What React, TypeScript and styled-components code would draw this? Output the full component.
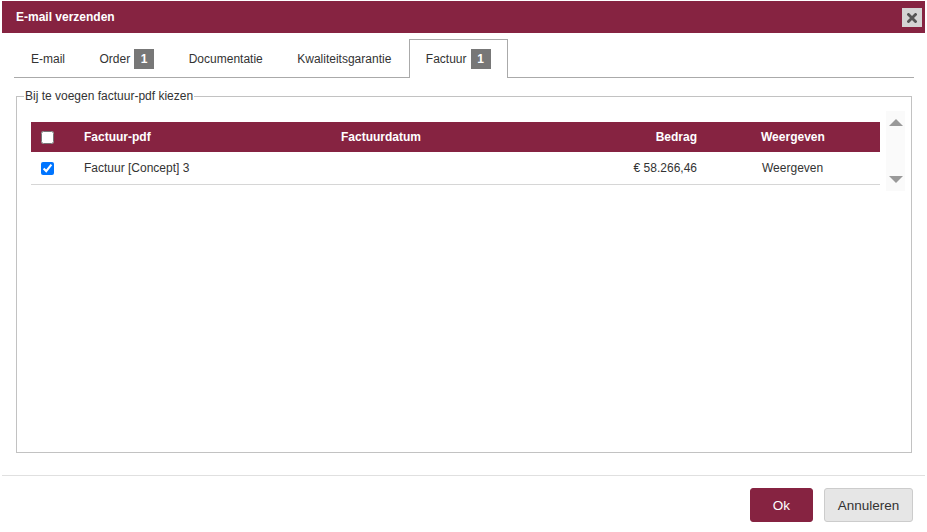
import React from 'react'
import styled, { createGlobalStyle } from 'styled-components'

const maroon = '#862341'

const GlobalStyle = createGlobalStyle`
  html, body {
    margin: 0;
    padding: 0;
    background: #fff;
  }
  body {
    font-family: "Liberation Sans", Arial, sans-serif;
    font-size: 12px;
    color: #333;
  }
`

const Dialog = styled.div`
  width: 927px;
  height: 532px;
  display: flex;
  flex-direction: column;
  box-sizing: border-box;
  padding: 1px 2px 0;
`

const TitleBar = styled.div`
  height: 32px;
  background: ${maroon};
  display: flex;
  align-items: center;
  justify-content: space-between;
  padding: 0 3px 0 14px;
  color: #fff;
  font-weight: bold;
  font-size: 12px;
`

const CloseButton = styled.button`
  width: 20px;
  height: 19px;
  border: none;
  padding: 0;
  background: #d4d4d4;
  display: flex;
  align-items: center;
  justify-content: center;
  margin-top: 1px;
`

const Body = styled.div`
  display: flex;
  flex-direction: column;
  padding: 6px 11px 0 12px;
`

const TabBar = styled.div`
  display: flex;
  height: 38px;
  border-bottom: 1px solid #aaa;
`

const Tab = styled.div<{ $active?: boolean }>`
  display: flex;
  align-items: center;
  gap: 4px;
  padding: 0 16px;
  margin-right: 0.5px;
  border: 1px solid ${(p) => (p.$active ? '#aaa' : 'transparent')};
  border-bottom: none;
  background: #fff;
  margin-bottom: ${(p) => (p.$active ? '-1px' : '0')};
  color: #333;
  cursor: pointer;
`

const Badge = styled.span`
  display: inline-flex;
  align-items: center;
  justify-content: center;
  width: 20px;
  height: 20px;
  background: #777;
  color: #fff;
  font-weight: bold;
  font-size: 12px;
`

const Fieldset = styled.fieldset`
  margin: 11px 2px 0;
  border: 1px solid #c2c2c2;
  padding: 0 6px 0 14px;
  height: 364px;
  box-sizing: border-box;
  min-width: 0;
`

const Legend = styled.legend`
  margin-left: -7px;
  padding: 0 1px;
  font-size: 12px;
  color: #333;
`

const Content = styled.div`
  display: flex;
  gap: 6px;
`

const TableWrap = styled.div`
  flex: 1;
  padding-top: 19px;
`

const Table = styled.table`
  width: 100%;
  border-collapse: collapse;
  table-layout: fixed;
`

const HeadCell = styled.th<{ $align?: string; $pl?: number }>`
  background: ${maroon};
  color: #fff;
  font-weight: bold;
  height: 30px;
  padding: 0 10px 0 ${(p) => p.$pl ?? 10}px;
  text-align: ${(p) => p.$align ?? 'left'};
`

const Cell = styled.td<{ $align?: string; $pl?: number }>`
  height: 32px;
  padding: 0 10px 0 ${(p) => p.$pl ?? 10}px;
  border-bottom: 1px solid #d6d6d6;
  text-align: ${(p) => p.$align ?? 'left'};
  color: #333;
`

const Check = styled.input`
  margin: 0;
  width: 13px;
  height: 13px;
  vertical-align: middle;
`

const ScrollCol = styled.div`
  width: 19px;
  height: 80px;
  margin-top: 8px;
  background: #fafafa;
  display: flex;
  flex-direction: column;
  justify-content: space-between;
  align-items: center;
  padding: 8px 0;
  box-sizing: border-box;
`

const Arrow = styled.div<{ $up?: boolean }>`
  width: 0;
  height: 0;
  border-left: 7px solid transparent;
  border-right: 7px solid transparent;
  ${(p) => (p.$up ? 'border-bottom: 7px solid #999;' : 'border-top: 7px solid #999;')}
`

const Footer = styled.div`
  margin-top: 22px;
  border-top: 1px solid #e0e0e0;
  display: flex;
  justify-content: flex-end;
  gap: 11px;
  padding: 12px 12px 0 0;
`

const Button = styled.button<{ $primary?: boolean; $width: number }>`
  width: ${(p) => p.$width}px;
  height: 34px;
  padding: 0;
  border-radius: 3px;
  font-family: "Liberation Sans", Arial, sans-serif;
  font-size: 13.5px;
  border: 1px solid ${(p) => (p.$primary ? maroon : '#ccc')};
  background: ${(p) => (p.$primary ? maroon : '#e6e6e6')};
  color: ${(p) => (p.$primary ? '#fff' : '#333')};
`

const tabs = [
  { label: 'E-mail' },
  { label: 'Order', badge: 1 },
  { label: 'Documentatie' },
  { label: 'Kwaliteitsgarantie' },
  { label: 'Factuur', badge: 1, active: true },
]

export default function App() {
  return (
    <>
      <GlobalStyle />
      <Dialog>
        <TitleBar>
          <span>E-mail verzenden</span>
          <CloseButton aria-label="Sluiten">
            <svg width="10" height="10" viewBox="0 0 10 10">
              <path d="M1.5 1.5 L8.5 8.5 M8.5 1.5 L1.5 8.5" stroke="#555" strokeWidth="2.8" strokeLinecap="square" />
            </svg>
          </CloseButton>
        </TitleBar>
        <Body>
          <TabBar>
            {tabs.map((t) => (
              <Tab key={t.label} $active={t.active}>
                {t.label}
                {t.badge && <Badge>{t.badge}</Badge>}
              </Tab>
            ))}
          </TabBar>
          <Fieldset>
            <Legend>Bij te voegen factuur-pdf kiezen</Legend>
            <Content>
              <TableWrap>
                <Table>
                  <colgroup>
                    <col style={{ width: 43 }} />
                    <col style={{ width: 257 }} />
                    <col style={{ width: 229 }} />
                    <col style={{ width: 147 }} />
                    <col />
                  </colgroup>
                  <thead>
                    <tr>
                      <HeadCell>
                        <Check type="checkbox" />
                      </HeadCell>
                      <HeadCell>Factuur-pdf</HeadCell>
                      <HeadCell>Factuurdatum</HeadCell>
                      <HeadCell $align="right">Bedrag</HeadCell>
                      <HeadCell $pl={54}>Weergeven</HeadCell>
                    </tr>
                  </thead>
                  <tbody>
                    <tr>
                      <Cell>
                        <Check type="checkbox" defaultChecked />
                      </Cell>
                      <Cell>Factuur [Concept] 3</Cell>
                      <Cell />
                      <Cell $align="right">€ 58.266,46</Cell>
                      <Cell $pl={55}>Weergeven</Cell>
                    </tr>
                  </tbody>
                </Table>
              </TableWrap>
              <ScrollCol>
                <Arrow $up />
                <Arrow />
              </ScrollCol>
            </Content>
          </Fieldset>
        </Body>
        <Footer>
          <Button $primary $width={63}>Ok</Button>
          <Button $width={89}>Annuleren</Button>
        </Footer>
      </Dialog>
    </>
  )
}
